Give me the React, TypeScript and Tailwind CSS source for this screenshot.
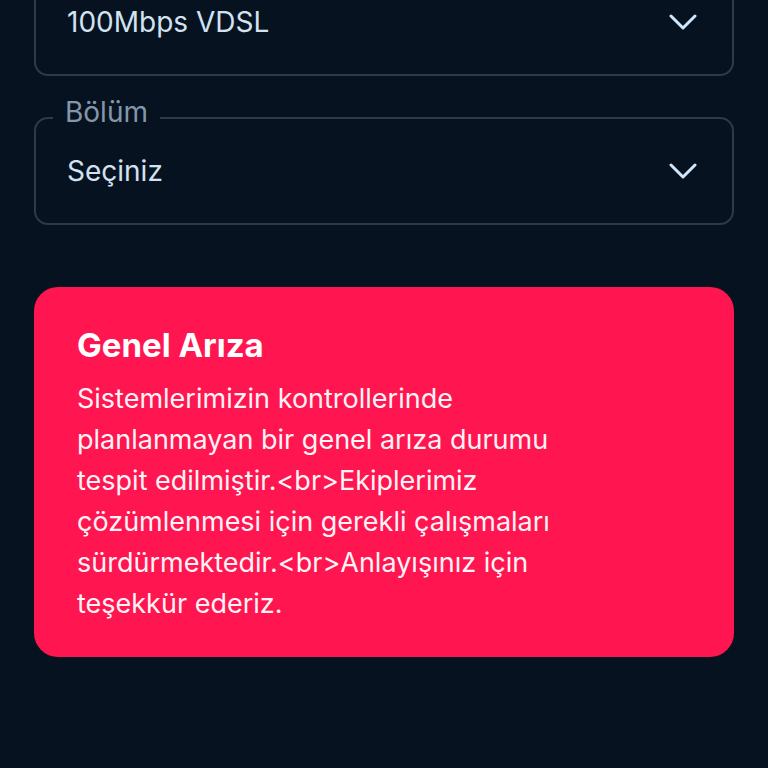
const ChevronDown = () => (
  <svg width="28" height="16" viewBox="0 0 28 16" fill="none" stroke="currentColor" strokeWidth="3" strokeLinecap="round" strokeLinejoin="round">
    <path d="M2 2L14 14L26 2" />
  </svg>
)

const SelectBox = ({ label, value }: { label?: string; value: string }) => {
  return (
    <div className="relative">
      {label && (
        <span className="absolute -top-[25px] left-[19px] bg-[#06121f] px-3 text-[28px] leading-[40px] text-[#8596a9]">
          {label}
        </span>
      )}
      <div className="flex h-[108px] items-center justify-between rounded-[14px] border-2 border-[#2c3a4b] pl-[31px] pr-[35px]">
        <span className="text-[28px] leading-[40px] text-[#d3e2f1]">{value}</span>
        <span className="text-[#cfe6fb]">
          <ChevronDown />
        </span>
      </div>
    </div>
  )
}

export default function App() {
  return (
    <div className="h-[768px] overflow-hidden bg-[#06121f] font-['Inter',sans-serif]">
      <div className="-mt-[32px] flex flex-col px-[34px]">
        <SelectBox value="100Mbps VDSL" />
        <div className="mt-[41px]">
          <SelectBox label="Bölüm" value="Seçiniz" />
        </div>
        <div className="mt-[62px] rounded-[24px] bg-[#ff1550] px-[43px] pb-[33px] pt-[38px]">
          <h2 className="text-[33px] font-bold leading-[40px] text-white">Genel Arıza</h2>
          <p className="mt-[13px] max-w-[520px] text-[27px] leading-[41px] text-[#fff3f6]">
            Sistemlerimizin kontrollerinde planlanmayan bir genel arıza durumu tespit edilmiştir.&lt;br&gt;Ekiplerimiz çözümlenmesi için gerekli çalışmaları sürdürmektedir.&lt;br&gt;Anlayışınız için teşekkür ederiz.
          </p>
        </div>
      </div>
    </div>
  )
}
